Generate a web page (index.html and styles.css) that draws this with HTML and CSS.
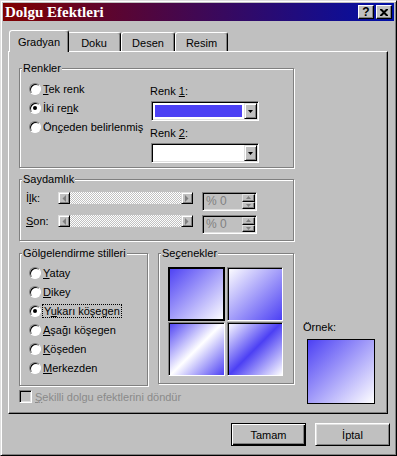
FILE: index.html
```html
<!DOCTYPE html>
<html lang="tr">
<head>
    <meta charset="UTF-8">
    <title>Dolgu Efektleri</title>
    <link rel="stylesheet" href="styles.css">
</head>
<body>
    <div class="window">
        <div class="titlebar">
            <span class="title">Dolgu Efektleri</span>
            <div class="title-btns">
                <span class="tbtn help">?</span>
                <span class="tbtn close">
                    <svg width="8" height="7" viewBox="0 0 8 7"><path d="M0 0h2l2 2 2-2h2v1L5.3 3.5 8 6v1H6L4 5 2 7H0V6l2.7-2.5L0 1z" fill="#000"/></svg>
                </span>
            </div>
        </div>

        <div class="tabs">
            <div class="tab active">Gradyan</div>
            <div class="tab">Doku</div>
            <div class="tab">Desen</div>
            <div class="tab">Resim</div>
        </div>

        <div class="panel">
            <div class="left-col">
                <fieldset class="group colors">
                    <legend>Renkler</legend>
                    <div class="colors-body">
                        <div class="radio-list">
                            <div class="radio-row"><span class="radio"></span><span><u>T</u>ek renk</span></div>
                            <div class="radio-row"><span class="radio checked"></span><span>İki re<u>n</u>k</span></div>
                            <div class="radio-row"><span class="radio"></span><span>Ön<u>ç</u>eden belirlenmiş</span></div>
                        </div>
                        <div class="pickers">
                            <div class="pick-label">Renk <u>1</u>:</div>
                            <div class="combo">
                                <span class="swatch blue"></span>
                                <span class="drop"><svg width="5" height="3" viewBox="0 0 5 3"><path d="M0 0h5L2.5 3z" fill="#000"/></svg></span>
                            </div>
                            <div class="pick-label second">Renk <u>2</u>:</div>
                            <div class="combo">
                                <span class="swatch"></span>
                                <span class="drop"><svg width="5" height="3" viewBox="0 0 5 3"><path d="M0 0h5L2.5 3z" fill="#000"/></svg></span>
                            </div>
                        </div>
                    </div>
                </fieldset>

                <fieldset class="group transp">
                    <legend>Saydamlık</legend>
                    <div class="transp-body">
                        <div class="slide-row">
                            <span class="slide-label">İ<u>l</u>k:</span>
                            <div class="slider">
                                <span class="sbtn"><svg width="4" height="7" viewBox="0 0 4 7"><path d="M4 0v7L0.5 3.5z" fill="#808080"/></svg></span>
                                <span class="track"></span>
                                <span class="sbtn"><svg width="4" height="7" viewBox="0 0 4 7"><path d="M0 0v7l3.5-3.5z" fill="#808080"/></svg></span>
                            </div>
                            <div class="spin">
                                <span class="spin-val">% 0</span>
                                <span class="spin-btns">
                                    <span class="spbtn"><svg width="5" height="3" viewBox="0 0 5 3"><path d="M0 3h5L2.5 0z" fill="#808080"/></svg></span>
                                    <span class="spbtn"><svg width="5" height="3" viewBox="0 0 5 3"><path d="M0 0h5L2.5 3z" fill="#808080"/></svg></span>
                                </span>
                            </div>
                        </div>
                        <div class="slide-row">
                            <span class="slide-label"><u>S</u>on:</span>
                            <div class="slider">
                                <span class="sbtn"><svg width="4" height="7" viewBox="0 0 4 7"><path d="M4 0v7L0.5 3.5z" fill="#808080"/></svg></span>
                                <span class="track"></span>
                                <span class="sbtn"><svg width="4" height="7" viewBox="0 0 4 7"><path d="M0 0v7l3.5-3.5z" fill="#808080"/></svg></span>
                            </div>
                            <div class="spin">
                                <span class="spin-val">% 0</span>
                                <span class="spin-btns">
                                    <span class="spbtn"><svg width="5" height="3" viewBox="0 0 5 3"><path d="M0 3h5L2.5 0z" fill="#808080"/></svg></span>
                                    <span class="spbtn"><svg width="5" height="3" viewBox="0 0 5 3"><path d="M0 0h5L2.5 3z" fill="#808080"/></svg></span>
                                </span>
                            </div>
                        </div>
                    </div>
                </fieldset>

                <div class="shade-row">
                    <fieldset class="group styles">
                        <legend>Gölgelendirme stilleri</legend>
                        <div class="styles-body">
                            <div class="radio-row"><span class="radio"></span><span><u>Y</u>atay</span></div>
                            <div class="radio-row"><span class="radio"></span><span><u>D</u>ikey</span></div>
                            <div class="radio-row"><span class="radio checked"></span><span class="focus">Y<u>u</u>karı köşegen</span></div>
                            <div class="radio-row"><span class="radio"></span><span><u>A</u>şağı köşegen</span></div>
                            <div class="radio-row"><span class="radio"></span><span><u>K</u>öşeden</span></div>
                            <div class="radio-row"><span class="radio"></span><span><u>M</u>erkezden</span></div>
                        </div>
                    </fieldset>
                    <fieldset class="group variants">
                        <legend>Se<u>ç</u>enekler</legend>
                        <div class="variant-grid">
                            <div class="variant v1 selected"></div>
                            <div class="variant v2"></div>
                            <div class="variant v3"></div>
                            <div class="variant v4"></div>
                        </div>
                    </fieldset>
                </div>

                <div class="check-row">
                    <span class="checkbox"></span>
                    <span class="disabled-text"><u>Ş</u>ekilli dolgu efektlerini döndür</span>
                </div>
            </div>

            <div class="sample">
                <div class="sample-label">Örnek:</div>
                <div class="sample-box"></div>
            </div>
        </div>

        <div class="buttons">
            <span class="btn default">Tamam</span>
            <span class="btn">İptal</span>
        </div>
    </div>
</body>
</html>
```

FILE: styles.css
```css
body { margin: 0; background: #c0c0c0; font-family: "Liberation Sans", Arial, sans-serif; font-size: 11px; color: #000; }
u { text-decoration: underline; text-underline-offset: 1px; }

.window { width: 397px; height: 456px; box-sizing: border-box; background: #c0c0c0; border: 1px solid; border-color: #dfdfdf #000 #000 #dfdfdf; box-shadow: inset 1px 1px 0 #fff, inset -1px -1px 0 #808080; padding: 2px; }

.titlebar { height: 18px; display: flex; align-items: center; justify-content: space-between; padding: 0 2px; background: linear-gradient(90deg, #800000, #0010a8); }
.title { color: #fff; font-family: "Liberation Serif", "Times New Roman", serif; font-weight: bold; font-size: 15px; line-height: 18px; }
.title-btns { display: flex; gap: 2px; }
.tbtn { width: 16px; height: 14px; box-sizing: border-box; display: flex; align-items: center; justify-content: center; background: #c0c0c0; border: 1px solid; border-color: #fff #000 #000 #fff; box-shadow: inset -1px -1px 0 #808080; font-weight: bold; font-size: 12px; line-height: 12px; }

.tabs { display: flex; align-items: flex-end; height: 21px; margin: 9px 0 0 6px; }
.tab { height: 19px; box-sizing: border-box; padding-top: 4px; text-align: center; background: #c0c0c0; border: 1px solid; border-bottom: 0; border-color: #fff #000 transparent #fff; border-radius: 3px 3px 0 0; box-shadow: inset -1px 0 0 #808080; }
.tab:nth-child(2) { width: 54px; }
.tab:nth-child(3) { width: 54px; }
.tab:nth-child(4) { width: 53px; }
.tab.active { width: 60px; height: 22px; margin: 0 -2px -1px 0; padding-top: 5px; position: relative; z-index: 1; }

.panel { width: 380px; height: 363px; box-sizing: border-box; margin-left: 5px; border: 1px solid; border-color: #fff #000 #000 #fff; box-shadow: inset -1px -1px 0 #808080; padding: 10px 0 0 10px; display: flex; }
.left-col { width: 275px; }

.group { margin: 0; padding: 0; min-width: 0; box-sizing: border-box; border: 1px solid #808080; box-shadow: inset 1px 1px 0 #fff, 1px 1px 0 #fff; }
.group legend { padding: 0 1px; margin-left: 2px; line-height: 13px; background: #c0c0c0; }

.colors-body { display: flex; height: 92px; box-sizing: border-box; padding: 4px 0 0 9px; }
.radio-list { width: 121px; }
.radio-row { height: 19px; display: flex; align-items: center; gap: 2px; white-space: nowrap; }
.radio { width: 12px; height: 12px; box-sizing: border-box; flex: none; border-radius: 50%; background: #fff; border: 1px solid; border-color: #808080 #fff #fff #808080; box-shadow: inset 1px 1px 0 #000; display: flex; align-items: center; justify-content: center; }
.radio.checked::after { content: ""; width: 4px; height: 4px; border-radius: 50%; background: #000; }

.pickers { padding-top: 6px; }
.pick-label { line-height: 13px; }
.pick-label.second { margin-top: 6px; }
.combo { width: 108px; height: 20px; box-sizing: border-box; margin: 3px 0 0 1px; padding: 1px; display: flex; background: #fff; border: 1px solid; border-color: #808080 #fff #fff #808080; box-shadow: inset 1px 1px 0 #000, inset -1px -1px 0 #dfdfdf; }
.swatch { flex: 1; margin: 2px; }
.swatch.blue { background: #4c40f4; }
.drop { width: 13px; height: 16px; box-sizing: border-box; display: flex; align-items: center; justify-content: center; background: #c0c0c0; border: 1px solid; border-color: #dfdfdf #000 #000 #dfdfdf; box-shadow: inset 1px 1px 0 #fff, inset -1px -1px 0 #808080; }

.transp { margin-top: 5px; }
.transp-body { padding: 6px 0 6px 6px; display: flex; flex-direction: column; gap: 4px; }
.slide-row { display: flex; align-items: flex-start; height: 19px; }
.slide-label { width: 32px; line-height: 13px; }
.slider { width: 135px; height: 12px; display: flex; }
.sbtn { width: 12px; height: 12px; box-sizing: border-box; display: flex; align-items: center; justify-content: center; background: #c0c0c0; border: 1px solid; border-color: #dfdfdf #000 #000 #dfdfdf; box-shadow: inset 1px 1px 0 #fff, inset -1px -1px 0 #808080; }
.track { flex: 1; background: repeating-conic-gradient(#fff 0 25%, #c0c0c0 0 50%) 0 0 / 2px 2px; }
.spin { width: 55px; height: 19px; box-sizing: border-box; margin-left: 9px; padding: 1px; display: flex; border: 1px solid; border-color: #808080 #fff #fff #808080; box-shadow: inset 1px 1px 0 #000, inset -1px -1px 0 #dfdfdf; }
.spin-val { flex: 1; padding-left: 2px; color: #808080; font-size: 12px; line-height: 15px; }
.spin-btns { width: 13px; display: flex; flex-direction: column; }
.spbtn { flex: 1; box-sizing: border-box; display: flex; align-items: center; justify-content: center; background: #c0c0c0; border: 1px solid; border-color: #dfdfdf #000 #000 #dfdfdf; box-shadow: inset -1px -1px 0 #808080; }

.shade-row { display: flex; align-items: flex-start; gap: 10px; margin-top: 6px; }
.styles { width: 129px; height: 139px; }
.styles-body { padding: 3px 0 0 9px; }
.focus { outline: 1px dotted #000; padding: 0 1px; line-height: 12px; }
.variants { width: 136px; height: 137px; }
.variant-grid { display: grid; grid-template-columns: 57px 56px; grid-auto-rows: 54px; gap: 1px 2px; padding: 7px 0 0 9px; }
.variant { box-sizing: border-box; border: 1px solid; border-color: #808080 #fff #fff #808080; box-shadow: inset 1px 1px 0 #000; }
.variant.selected { border-color: #000; box-shadow: inset 0 0 0 1px #000; }
.v1 { background: linear-gradient(135deg, #4c40f4, #fff); }
.v2 { background: linear-gradient(135deg, #fff, #4c40f4); }
.v3 { background: linear-gradient(135deg, #4c40f4, #fff 50%, #4c40f4); }
.v4 { background: linear-gradient(135deg, #fff, #4c40f4 50%, #fff); }

.check-row { display: flex; align-items: center; gap: 3px; margin-top: 4px; height: 13px; }
.checkbox { width: 13px; height: 13px; box-sizing: border-box; background: #c0c0c0; border: 1px solid; border-color: #808080 #fff #fff #808080; box-shadow: inset 1px 1px 0 #000, inset -1px -1px 0 #dfdfdf; }
.disabled-text { color: #8a8a8a; }

.sample { align-self: flex-end; margin: 0 0 9px 9px; }
.sample-label { line-height: 13px; margin-bottom: 5px; }
.sample-box { width: 68px; height: 65px; box-sizing: border-box; margin-left: 4px; border: 1px solid #000; background: linear-gradient(135deg, #4c40f4, #fff); }

.buttons { display: flex; justify-content: flex-end; gap: 9px; margin-top: 9px; padding-right: 4px; }
.btn { width: 75px; height: 23px; box-sizing: border-box; display: flex; align-items: center; justify-content: center; background: #c0c0c0; border: 1px solid; border-color: #fff #000 #000 #fff; box-shadow: inset 1px 1px 0 #dfdfdf, inset -1px -1px 0 #808080; }
.btn.default { border-color: #000; box-shadow: inset 1px 1px 0 #fff, inset -1px -1px 0 #000, inset -2px -2px 0 #808080; }
```
